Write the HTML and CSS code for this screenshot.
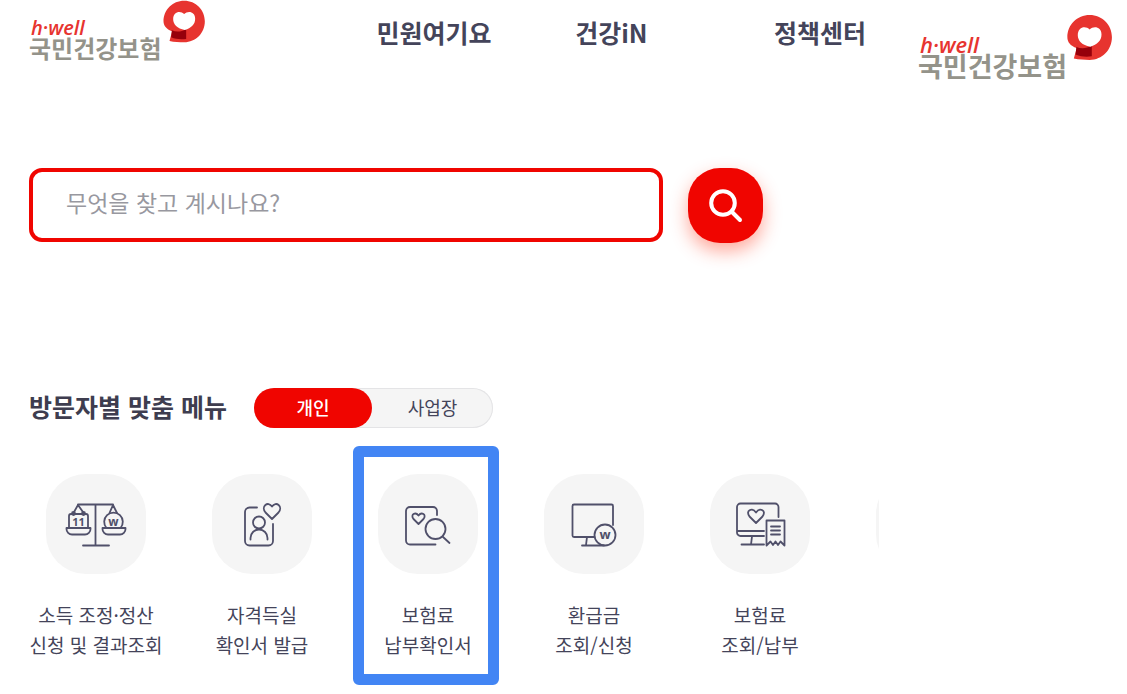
FILE: index.html
```html
<!DOCTYPE html>
<html lang="ko">
<head>
<meta charset="utf-8">
<meta name="viewport" content="width=device-width, initial-scale=1">
<title>국민건강보험</title>
<link rel="stylesheet" href="styles.css">
</head>
<body>
<svg class="defs" aria-hidden="true">
  <symbol id="mark" viewBox="428 0 128 132">
    <path fill="#e7342f" d="M491 2C456 2 429 29 429 64C429 77 437 88 455 94L447 123C461 126 477 127 491 127C526 127 553 99 553 64S526 2 491 2Z"/>
    <path fill="#96000b" d="M454 91C468 97 482 96 497 87V117C481 119 466 118 452 112Z"/>
    <path fill="#fff" d="M491 42C480 31 458 34 458 58C458 73 470 86 493 90C512 84 524 73 524 56C524 34 502 31 491 42Z"/>
  </symbol>
</svg>
<div class="page">
  <main class="main">
    <header class="header">
      <a class="logo" href="#">
        <span class="logo-text"><span class="logo-en">h·well</span><span class="logo-ko">국민건강보험</span></span>
        <svg class="logo-mark" aria-hidden="true"><use href="#mark"/></svg>
      </a>
      <nav class="nav">
        <a href="#">민원여기요</a>
        <a href="#">건강iN</a>
        <a href="#">정책센터</a>
      </nav>
    </header>

    <form class="search">
      <input class="search-input" type="text" placeholder="무엇을 찾고 계시나요?" aria-label="검색어">
      <button class="search-button" type="button" aria-label="검색">
        <svg viewBox="0 0 34 34" aria-hidden="true"><circle cx="14" cy="14" r="11.8"/><path d="M22.5 22.5L31 31"/></svg>
      </button>
    </form>

    <section class="menu">
      <div class="menu-head">
        <h2 class="menu-title">방문자별 맞춤 메뉴</h2>
        <div class="tabs">
          <button class="tab tab-active" type="button">개인</button>
          <button class="tab" type="button">사업장</button>
        </div>
      </div>
      <ul class="items">
        <li class="item"><a href="#">
          <span class="tile"><svg viewBox="0 0 100 100" aria-hidden="true">
            <path d="M32 30.5H67M49.5 30.5V71M37 71.5H63"/>
            <path d="M32 31L28 38M32 31L37 38M67 31L63.5 39M67 31L71 39"/>
            <path d="M23 54V42a2 2 0 0 1 2-2H40a2 2 0 0 1 2 2V54M20.5 54H44.5V55a5.5 5.5 0 0 1-5.5 5.5H26a5.5 5.5 0 0 1-5.5-5.5Z"/>
            <circle cx="27.5" cy="39.5" r="1.5"/><circle cx="37.5" cy="39.5" r="1.5"/>
            <path d="M60.5 54a9.3 9.3 0 1 1 14 0M56.5 54H79.5V55a5.5 5.5 0 0 1-5.5 5.5H62a5.5 5.5 0 0 1-5.5-5.5Z"/>
            <text x="32.5" y="51.5" font-size="11">11</text><text x="67.5" y="51.5" font-size="12">w</text>
          </svg></span>
          <span class="label">소득 조정·정산<br>신청 및 결과조회</span>
        </a></li>
        <li class="item"><a href="#">
          <span class="tile"><svg viewBox="0 0 100 100" aria-hidden="true">
            <path d="M45 33.5H37.5a4.5 4.5 0 0 0-4.5 4.5V67a4.5 4.5 0 0 0 4.5 4.5H56.5a4.5 4.5 0 0 0 4.5-4.5V50"/>
            <circle cx="47" cy="48.5" r="6"/><path d="M38.5 65.5V64a8.5 8.5 0 0 1 17 0V65.5"/>
            <path d="M60 45L53.5 38.5C48.5 32.5 56 26.5 60 32.5C64 26.5 71.5 32.5 66.5 38.5Z"/>
          </svg></span>
          <span class="label">자격득실<br>확인서 발급</span>
        </a></li>
        <li class="item item-marked"><a href="#">
          <span class="tile"><svg viewBox="0 0 100 100" aria-hidden="true">
            <path d="M59 41V37a4 4 0 0 0-4-4H32a4 4 0 0 0-4 4V66.500a4 4 0 0 0 4 4H57.5"/>
            <circle cx="57.5" cy="55" r="10"/><path d="M64.5 62.5L71.5 69"/>
            <path d="M40.5 50L35.500 45C32 40.5 37.500 37.500 40.5 41.500C43.500 37.500 49 40.500 45.500 45Z"/>
          </svg></span>
          <span class="label">보험료<br>납부확인서</span>
        </a></li>
        <li class="item"><a href="#">
          <span class="tile"><svg viewBox="0 0 100 100" aria-hidden="true">
            <path d="M69 51V32a1.5 1.5 0 0 0-1.5-1.5H30a1.5 1.5 0 0 0-1.5 1.5V61.5a1.5 1.5 0 0 0 1.5 1.5H50M43 63L42 71M38 71.5H60"/>
            <circle cx="61" cy="61" r="10.5"/><text x="61" y="65" font-size="13">w</text>
          </svg></span>
          <span class="label">환급금<br>조회/신청</span>
        </a></li>
        <li class="item"><a href="#">
          <span class="tile"><svg viewBox="0 0 100 100" aria-hidden="true">
            <path d="M68.5 43V33a3.5 3.5 0 0 0-3.5-3.5H30.5a3.5 3.5 0 0 0-3.5 3.5V58.5a3.5 3.5 0 0 0 3.5 3.5H54M27 57H54M42 62.5L41 70.5M31.5 70.5H54"/>
            <path d="M46 49L39.500 42.5C35 36.500 42 33 46 38.5C50 33 57 36.500 52.500 42.5Z"/>
            <path d="M56.5 71.5V46.5H74.5V71.5L70.5 67.5L68 71L65.5 67.5L63 71L60.5 67.5Z M61 52.5H70M61 56.5H70M61 60.5H70"/>
          </svg></span>
          <span class="label">보험료<br>조회/납부</span>
        </a></li>
        <li class="item" aria-hidden="true"><span class="tile"></span></li>
      </ul>
    </section>
  </main>
  <aside class="side">
    <a class="logo logo-large" href="#">
      <span class="logo-text"><span class="logo-en">h·well</span><span class="logo-ko">국민건강보험</span></span>
      <svg class="logo-mark" aria-hidden="true"><use href="#mark"/></svg>
    </a>
  </aside>
</div>
</body>
</html>
```

FILE: styles.css
```css
* { box-sizing: border-box; }

body {
  margin: 0;
  background: #fff;
  color: #44445a;
  font-family: "Noto Sans CJK KR", "Noto Sans", sans-serif;
}

a { color: inherit; text-decoration: none; }
.defs { position: absolute; width: 0; height: 0; }

.page { display: grid; grid-template-columns: minmax(0, 1fr) 248px; }

.header { display: flex; align-items: flex-start; padding: 0 13px 0 29px; height: 168px; }

.logo { display: flex; align-items: flex-start; gap: 2px; font-size: 24px; white-space: nowrap; }
.logo-text { display: flex; flex-direction: column; padding-top: 18px; }
.logo-en {
  padding-left: 2px;
  color: #e7342f;
  font: italic 600 20px/20px "Open Sans", sans-serif;
}
.logo-ko { color: #94938a; font-weight: 700; line-height: 20px; }
.logo-mark { width: 43px; height: 44px; }

.side { padding: 14px 0 0 39px; }
.logo-large { gap: 0; font-size: 27px; }
.logo-large .logo-text { padding-top: 19px; }
.logo-large .logo-en { font-size: 22px; line-height: 22px; }
.logo-large .logo-ko { line-height: 22px; }
.logo-large .logo-mark { width: 46px; height: 48px; }

.nav {
  display: grid;
  flex: 1;
  grid-template-columns: 1fr 1fr auto;
  margin-left: 170px;
  padding-top: 14px;
  font-size: 25px;
  font-weight: 700;
  line-height: 36px;
}

.search { display: flex; gap: 25px; padding: 0 116px 0 29px; }
.search-input {
  flex: 1;
  min-width: 0;
  height: 74px;
  padding: 0 33px 6px;
  border: 4px solid #f00500;
  border-radius: 13px;
  background: #fff;
  color: #44445a;
  font: 400 23px "Noto Sans CJK KR", sans-serif;
}
.search-input::placeholder { color: #9898a0; opacity: 1; }
.search-button {
  display: grid;
  place-items: center;
  width: 75px;
  height: 75px;
  padding: 0;
  border: 0;
  border-radius: 32px;
  background: #f00500;
  box-shadow: 0 8px 18px rgba(255, 50, 20, 0.42);
}
.search-button svg {
  width: 34px;
  height: 34px;
  fill: none;
  stroke: #fff;
  stroke-width: 4;
  stroke-linecap: round;
}

.menu { padding-top: 145px; }
.menu-head { display: flex; align-items: center; gap: 27px; padding-left: 29px; }
.menu-title { margin: 0; padding-bottom: 4px; color: #3e3d4f; font-size: 25px; font-weight: 700; line-height: 36px; }

.tabs {
  display: flex;
  width: 239px;
  height: 40px;
  border-radius: 20px;
  background: #f5f5f5;
  box-shadow: inset 0 0 0 1px #e4e4e6;
}
.tab {
  flex: 1;
  padding: 0 0 2px;
  border: 0;
  border-radius: 20px;
  background: none;
  color: #44445a;
  font: 400 18px "Noto Sans CJK KR", sans-serif;
}
.tab-active { flex: 0 0 118px; background: #f00500; color: #fff; font-weight: 500; }

.items {
  display: flex;
  margin: 0;
  padding: 46px 0 34px 13px;
  overflow: hidden;
  list-style: none;
}
.item { position: relative; flex: 0 0 166px; text-align: center; }
.item-marked::after {
  content: "";
  position: absolute;
  inset: -28px 12px -25px 8px;
  border: 11px solid #4285f4;
  border-radius: 6px;
  pointer-events: none;
}
.tile {
  display: block;
  width: 100px;
  height: 100px;
  margin: 0 auto;
  border-radius: 40px;
  background: #f5f5f5;
}
.tile svg {
  display: block;
  fill: none;
  stroke: #50506a;
  stroke-width: 1.8;
  stroke-linecap: round;
  stroke-linejoin: round;
}
.tile text {
  fill: #50506a;
  stroke: none;
  font-family: "Open Sans", sans-serif;
  font-weight: 700;
  text-anchor: middle;
}
.label { display: block; padding-top: 26px; font-size: 19px; line-height: 30px; white-space: nowrap; }
```
